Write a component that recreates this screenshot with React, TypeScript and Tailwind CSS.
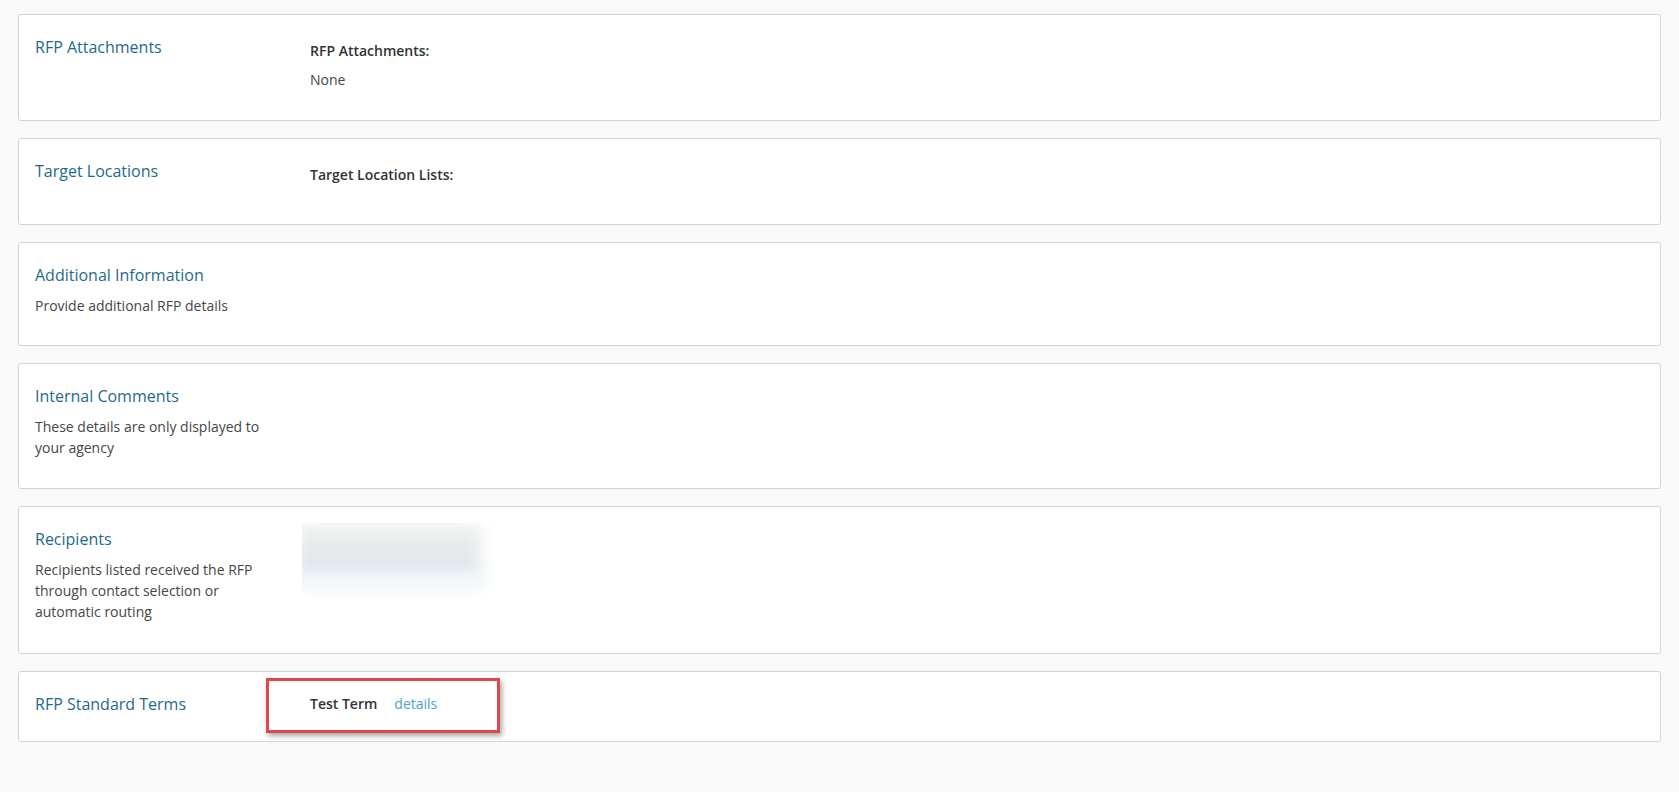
import React from "react";

function Card({
  title,
  desc,
  children,
  overlay,
  pb = "pb-[24px]",
}: {
  title: string;
  desc?: string;
  children?: React.ReactNode;
  overlay?: React.ReactNode;
  pb?: string;
}) {
  return (
    <div className={`relative flex rounded-[3px] border border-[#d4d4d4] bg-white pl-4 pr-4 pt-[21px] ${pb}`}>
      <div className="w-[275px] shrink-0">
        <h3 className="text-[16px] leading-[22px] font-normal text-[#1f6a8c]">{title}</h3>
        {desc && (
          <p className="mt-[9px] mb-[6px] w-[240px] text-[14px] leading-[21px] text-[#464646]">{desc}</p>
        )}
      </div>
      <div className="flex-1">{children}</div>
      {overlay}
    </div>
  );
}

function Field({ label, value }: { label: string; value?: string }) {
  return (
    <div className="pt-[5px]">
      <div className="mb-[9px] text-[14px] leading-[20px] font-semibold text-[#333333]">{label}</div>
      <div className="pb-[6px] text-[14px] leading-[20px] text-[#464646]">{value}</div>
    </div>
  );
}

function BlurredRecipients() {
  return (
    <div className="relative -ml-[8px] -mt-[5px] h-[76px] w-[205px] overflow-hidden bg-white">
      <div className="absolute -left-[6px] top-[0px] h-[60px] w-[185px] bg-linear-to-b from-[#f1f2f2] via-[#e4e8ea] to-[#dfedf5] blur-[8px]" />
      <div className="absolute left-[0px] top-[50px] h-[18px] w-[180px] bg-[#f3f8fa] blur-[6px]" />
    </div>
  );
}

export default function App() {
  return (
    <div
      className="min-h-[792px] w-full bg-[#f9f9f9] px-[18px] pt-[14px]"
      style={{ fontFamily: '"Open Sans", "Noto Sans", sans-serif' }}
    >
      <div className="flex flex-col gap-[17px]">
        <Card title="RFP Attachments">
          <Field label="RFP Attachments:" value="None" />
        </Card>
        <Card title="Target Locations">
          <Field label="Target Location Lists:" />
        </Card>
        <Card title="Additional Information" desc="Provide additional RFP details" pb="pb-[23px]" />
        <Card title="Internal Comments" desc="These details are only displayed to your agency" />
        <Card
          title="Recipients"
          desc="Recipients listed received the RFP through contact selection or automatic routing"
          pb="pb-[25px]"
        >
          <BlurredRecipients />
        </Card>
        <Card
          title="RFP Standard Terms"
          pb="pb-[26px]"
          overlay={
            <div className="pointer-events-none absolute left-[247px] top-[6px] h-[55px] w-[234px] border-[3px] border-[#e0474b] shadow-[2px_3px_5px_rgba(0,0,0,0.35)]" />
          }
        >
          <div className="flex items-baseline text-[14px] leading-[22px]">
            <span className="font-semibold text-[#333333]">Test Term</span>
            <a className="ml-[17px] text-[#4aa3cf]" href="#">
              details
            </a>
          </div>
        </Card>
      </div>
    </div>
  );
}
